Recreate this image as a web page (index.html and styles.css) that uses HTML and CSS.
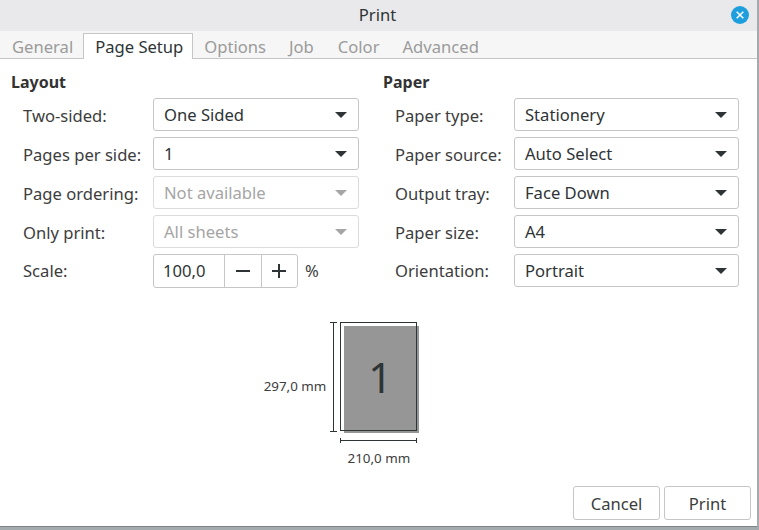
FILE: index.html
```html
<!DOCTYPE html>
<html lang="en">
<head>
<meta charset="UTF-8" />
<title>Print</title>
<link rel="stylesheet" href="styles.css">
</head>
<body>

<div class="dialog">
  <div class="titlebar">
    <span class="title">Print</span>
    <span class="close-btn">
      <svg width="18" height="18" viewBox="0 0 18 18">
        <circle cx="9" cy="9" r="9" fill="#1f9ede" />
        <path d="M5.7 5.7l6.6 6.6M12.3 5.7l-6.6 6.6" stroke="#fff" stroke-width="1.5" fill="none" />
      </svg>
    </span>
  </div>

  <div class="tabs">
    <span class="tab tab-general">General</span>
    <span class="tab active">Page Setup</span>
    <span class="tab tab-options">Options</span>
    <span class="tab tab-job">Job</span>
    <span class="tab tab-color">Color</span>
    <span class="tab">Advanced</span>
  </div>

  <div class="content">
    <div class="columns">
      <div class="group group-layout">
        <h3>Layout</h3>
        <div class="form-row">
          <label>Two-sided:</label>
          <div class="select">One Sided<i class="caret"></i></div>
        </div>
        <div class="form-row">
          <label>Pages per side:</label>
          <div class="select">1<i class="caret"></i></div>
        </div>
        <div class="form-row">
          <label>Page ordering:</label>
          <div class="select disabled">Not available<i class="caret"></i></div>
        </div>
        <div class="form-row">
          <label>Only print:</label>
          <div class="select disabled">All sheets<i class="caret"></i></div>
        </div>
        <div class="form-row">
          <label>Scale:</label>
          <div class="spin">
            <span class="spin-value">100,0</span>
            <span class="spin-btn">
              <svg width="14" height="14" viewBox="0 0 14 14"><path d="M0 7h14" stroke="#2e3436" stroke-width="2" /></svg>
            </span>
            <span class="spin-btn">
              <svg width="14" height="14" viewBox="0 0 14 14"><path d="M0 7h14M7 0v14" stroke="#2e3436" stroke-width="2" /></svg>
            </span>
          </div>
          <span class="unit">%</span>
        </div>
      </div>

      <div class="group group-paper">
        <h3>Paper</h3>
        <div class="form-row">
          <label>Paper type:</label>
          <div class="select">Stationery<i class="caret"></i></div>
        </div>
        <div class="form-row">
          <label>Paper source:</label>
          <div class="select">Auto Select<i class="caret"></i></div>
        </div>
        <div class="form-row">
          <label>Output tray:</label>
          <div class="select">Face Down<i class="caret"></i></div>
        </div>
        <div class="form-row">
          <label>Paper size:</label>
          <div class="select">A4<i class="caret"></i></div>
        </div>
        <div class="form-row">
          <label>Orientation:</label>
          <div class="select">Portrait<i class="caret"></i></div>
        </div>
      </div>
    </div>

    <div class="preview">
      <span class="dim-height">297,0 mm</span>
      <svg class="height-rule" width="7" height="110" viewBox="0 0 7 110">
        <path d="M3.5 0v110M0 .5h7M0 109.5h7" stroke="#2e3436" fill="none" />
      </svg>
      <div class="sheet-col">
        <div class="sheet">
          <div class="sheet-page">1</div>
        </div>
        <svg class="width-rule" width="77" height="5" viewBox="0 0 77 5">
          <path d="M0 2.5h77M.5 0v5M76.5 0v5" stroke="#2e3436" fill="none" />
        </svg>
        <span class="dim-width">210,0 mm</span>
      </div>
    </div>

    <div class="actions">
      <button class="btn">Cancel</button>
      <button class="btn">Print</button>
    </div>
  </div>
</div>

</body>
</html>
```

FILE: styles.css
```css
body {
  margin: 0;
  background: #a3abae;
  font-family: "Noto Sans", sans-serif;
  font-size: 16.6px;
  color: #3d3d3d;
  height: 530px;
  overflow: hidden;
}

.dialog {
  width: 757px;
  height: 527px;
  background: #fff;
  border-bottom: 1px solid #7d8385;
  box-sizing: border-box;
  display: flex;
  flex-direction: column;
  isolation: isolate;
}

.titlebar {
  height: 31px;
  flex: none;
  background: #e9e9eb;
  display: flex;
  align-items: center;
  justify-content: center;
  position: relative;
}

.title {
  color: #2e3436;
  margin-top: -3px;
  margin-right: 2px;
}

.close-btn {
  position: absolute;
  right: 8px;
  top: 6px;
  height: 18px;
}

.tabs {
  height: 28px;
  flex: none;
  box-sizing: border-box;
  background: #f6f6f6;
  border-bottom: 1px solid #c6c6c8;
  display: flex;
  padding-top: 2px;
}

.tab {
  padding: 0 10px;
  color: #9b9b9b;
  box-sizing: border-box;
  height: 26px;
  line-height: 26px;
  border: 1px solid transparent;
  border-bottom: none;
}

.tab-general {
  padding: 0 9px 0 11px;
}

.tab-options {
  padding-right: 11px;
}

.tab-job {
  padding-right: 12px;
}

.tab-color {
  padding-right: 11px;
}

.tab.active {
  background: #fff;
  color: #2e3436;
  border-color: #c6c6c8;
  padding: 0 9px 0 11px;
}

.content {
  flex: 1;
  display: flex;
  flex-direction: column;
  min-height: 0;
}

.columns {
  display: flex;
  padding-top: 12px;
}

.group-layout {
  width: 383px;
  padding-left: 11px;
  box-sizing: border-box;
}

.group-paper {
  flex: 1;
}

.group h3 {
  margin: 0 0 5px;
  height: 22px;
  line-height: 22px;
  font-size: 16px;
  font-weight: 700;
  color: #333;
}

.form-row {
  display: flex;
  align-items: center;
  height: 33px;
  margin-bottom: 6px;
  padding-left: 12px;
}

.form-row label {
  flex: none;
  padding-top: 2px;
}

.form-row:last-child label {
  padding-top: 0;
}

.group-layout label {
  width: 130px;
}

.group-paper label {
  width: 119px;
}

.select {
  box-sizing: border-box;
  height: 33px;
  line-height: 31px;
  border: 1px solid #c6c6c8;
  border-radius: 3px;
  padding-left: 10px;
  background: #fff;
  color: #2e3436;
  display: flex;
  justify-content: space-between;
  align-items: center;
}

.group-layout .select {
  width: 206px;
}

.group-paper .select {
  width: 225px;
}

.select.disabled {
  color: #a5a5a5;
  border-color: #dcdcde;
}

.caret {
  width: 0;
  height: 0;
  margin-right: 11px;
  border-left: 6px solid transparent;
  border-right: 6px solid transparent;
  border-top: 6px solid #2e3436;
}

.select.disabled .caret {
  border-top-color: #a5a5a5;
}

.spin {
  display: flex;
  box-sizing: border-box;
  width: 145px;
  height: 34px;
  border: 1px solid #c6c6c8;
  border-radius: 3px;
  color: #2e3436;
}

.spin-value {
  width: 70px;
  padding-left: 9px;
  box-sizing: border-box;
  line-height: 32px;
}

.spin-btn {
  flex: 1;
  border-left: 1px solid #c6c6c8;
  display: flex;
  align-items: center;
  justify-content: center;
}

.unit {
  margin-left: 7px;
}

.preview {
  display: flex;
  justify-content: center;
  align-items: flex-start;
  margin-top: 29px;
  height: 150px;
}

.dim-height {
  font-size: 13.4px;
  margin-top: 55px;
  margin-right: 4px;
  color: #3d3d3d;
}

.height-rule {
  margin-right: 3px;
}

.sheet-col {
  display: flex;
  flex-direction: column;
  align-items: center;
  width: 77px;
  margin-right: 76px;
}

.sheet {
  box-sizing: border-box;
  width: 77px;
  height: 109px;
  border: 1px solid #2e3436;
  position: relative;
}

.sheet-page {
  position: absolute;
  left: 3px;
  top: 3px;
  width: 75px;
  height: 107px;
  padding: 0 3px 7px 0;
  box-sizing: border-box;
  background: #969696;
  z-index: -1;
  font-size: 42px;
  color: #2e3436;
  display: flex;
  align-items: center;
  justify-content: center;
}

.width-rule {
  margin-top: 7px;
}

.dim-width {
  font-size: 13.4px;
  margin-top: 6px;
  white-space: nowrap;
}

.actions {
  display: flex;
  justify-content: flex-end;
  gap: 4px;
  margin-top: auto;
  padding: 0 6px 6px 0;
}

.btn {
  width: 87px;
  height: 34px;
  border: 1px solid #c6c6c8;
  border-radius: 3px;
  background: #fff;
  font: inherit;
  color: #3d3d3d;
}
```
